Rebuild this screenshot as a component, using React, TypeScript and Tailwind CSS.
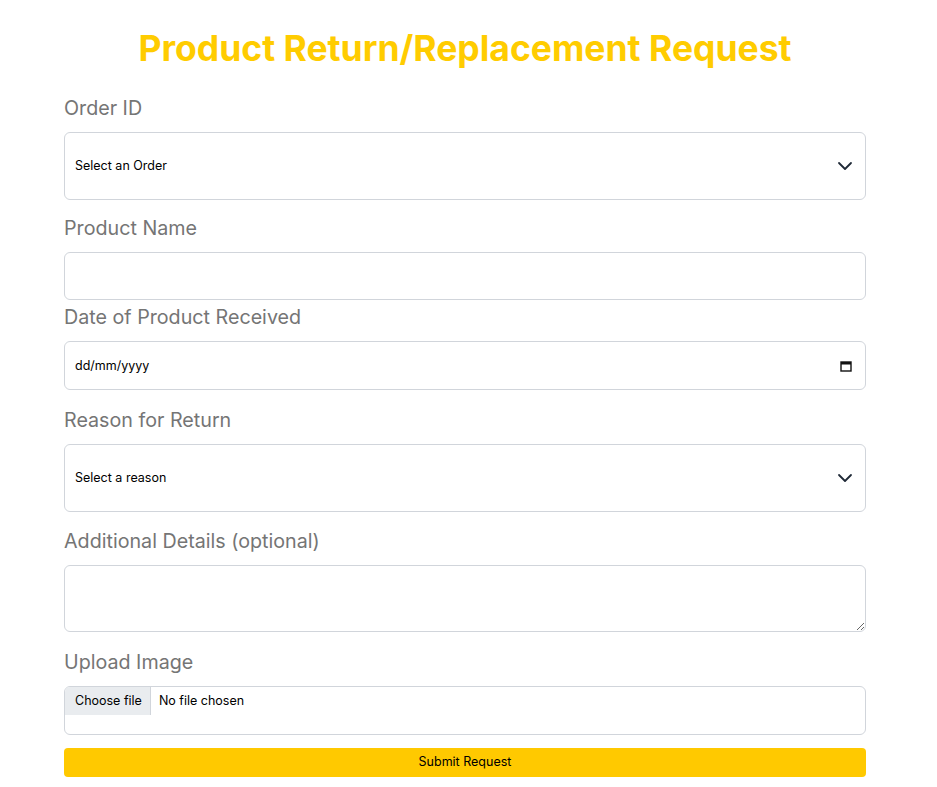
import { ChevronDown } from "lucide-react";

const labelCls =
  "block text-[19.7px] leading-[25px] text-[#757575] mb-[11px] font-['Inter',sans-serif]";
const boxCls =
  "w-full rounded-[6px] border border-[#d1d5db] bg-white px-[10px] text-[12.5px] text-black outline-none font-['Inter',sans-serif]";

const SelectField = ({ placeholder }: { placeholder: string }) => (
  <div className="relative">
    <select className={`${boxCls} h-[68px] appearance-none`} defaultValue="">
      <option value="" disabled>
        {placeholder}
      </option>
    </select>
    <ChevronDown
      className="pointer-events-none absolute right-[9px] top-1/2 -translate-y-1/2 text-[#1f2937]"
      size={24}
      strokeWidth={1.8}
    />
  </div>
);

const App = () => {
  return (
    <div className="min-h-screen bg-white font-['Inter',sans-serif]">
      <form className="ml-[64px] w-[802px] pt-[29px]">
        {/* ============ title ============ */}
        <h1 className="mb-[27px] text-center text-[35.5px] font-bold leading-[40px] text-[#ffcc00]">
          Product Return/Replacement Request
        </h1>

        <label className={labelCls}>Order ID</label>
        <SelectField placeholder="Select an Order" />

        <label className={`${labelCls} mt-[16px]`}>Product Name</label>
        <input type="text" className={`${boxCls} h-[48px]`} />

        <label className={`${labelCls} mt-[5px]`}>Date of Product Received</label>
        <div className="relative">
          <input
            type="text"
            placeholder="dd/mm/yyyy"
            className={`${boxCls} h-[49px] placeholder:text-black`}
          />
          {/* calendar glyph */}
          <svg
            className="pointer-events-none absolute right-[14px] top-1/2 -translate-y-1/2"
            width="12"
            height="12"
            viewBox="0 0 12 12"
          >
            <rect x="1" y="2" width="10" height="9" fill="none" stroke="#111" strokeWidth="1.4" />
            <rect x="1" y="2" width="10" height="2.5" fill="#111" />
          </svg>
        </div>

        <label className={`${labelCls} mt-[18px]`}>Reason for Return</label>
        <SelectField placeholder="Select a reason" />

        <label className={`${labelCls} mt-[17px]`}>Additional Details (optional)</label>
        <textarea className={`${boxCls} block h-[67px] py-2`} />

        <label className={`${labelCls} mt-[18px]`}>Upload Image</label>
        <label className="block h-[49px] w-full cursor-pointer overflow-hidden rounded-[6px] border border-[#d1d5db] bg-white text-[12.5px] text-black font-['Inter',sans-serif]">
          <input type="file" className="hidden" />
          <div className="flex h-[28px] items-center">
            <span className="flex h-full items-center border-r border-[#d1d5db] bg-[#e9ecef] pl-[10px] pr-[8px]">
              Choose file
            </span>
            <span className="pl-[8px]">No file chosen</span>
          </div>
        </label>

        <button
          type="button"
          className="mt-[13px] h-[29px] w-full rounded-[4px] bg-[#ffc900] text-[12.5px] text-black"
        >
          Submit Request
        </button>
      </form>
    </div>
  );
};

export default App;
